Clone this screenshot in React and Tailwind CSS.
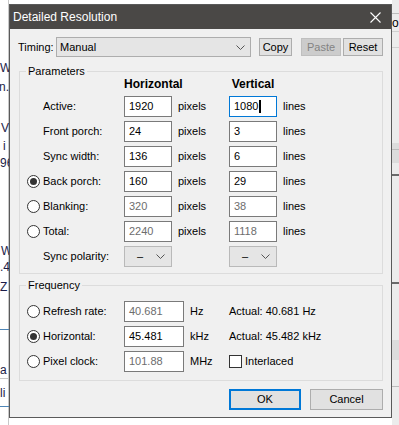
import React from 'react';

const font = { fontFamily: '"Liberation Sans", Arial, sans-serif' };

const Radio = ({ checked }) => (
    <span className="w-[13px] h-[13px] rounded-full border border-[#333] bg-white flex items-center justify-center shrink-0">
        {checked && <span className="w-[7px] h-[7px] rounded-full bg-[#333]" />}
    </span>
);

const Field = ({ value, disabled, focused, width = 'w-[48px]' }) => (
    <div
        className={`${width} h-[21px] bg-white border flex items-center pl-[4px] ${
            focused ? 'border-[#0078d7]' : 'border-[#7a7a7a]'
        } ${disabled ? 'text-[#6d6d6d]' : 'text-black'}`}
    >
        {value}
        {focused && <span className="w-[2px] h-[13px] bg-black ml-[1px]" />}
    </div>
);

const Chevron = () => (
    <svg width="9" height="5" viewBox="0 0 9 5" className="shrink-0">
        <path d="M0.5 0.5 L4.5 4.5 L8.5 0.5" fill="none" stroke="#555" strokeWidth="1" />
    </svg>
);

const paramRows = [
    { label: 'Active:', h: '1920', v: '1080', focused: true },
    { label: 'Front porch:', h: '24', v: '3' },
    { label: 'Sync width:', h: '136', v: '6' },
    { label: 'Back porch:', h: '160', v: '29', radio: true, checked: true },
    { label: 'Blanking:', h: '320', v: '38', radio: true, disabled: true },
    { label: 'Total:', h: '2240', v: '1118', radio: true, disabled: true },
];

const freqRows = [
    { label: 'Refresh rate:', value: '40.681', unit: 'Hz', actual: 'Actual: 40.681 Hz', disabled: true },
    { label: 'Horizontal:', value: '45.481', unit: 'kHz', actual: 'Actual: 45.482 kHz', checked: true },
    { label: 'Pixel clock:', value: '101.88', unit: 'MHz', disabled: true, interlaced: true },
];

const Polarity = () => (
    <div className="w-[48px] h-[21px] bg-[#e5e5e5] border border-[#b9b9b9] flex items-center pl-[12px] pr-[6px] justify-between">
        <span className="text-black">–</span>
        <Chevron />
    </div>
);

const Backdrop = () => (
    <div className="absolute inset-0 bg-white text-[#1c1c48] text-[12px] leading-[14px]" style={font}>
        {/* bits of the window behind, left side */}
        <div className="absolute left-[8px] top-0 bottom-0 w-px bg-[#c8c8c8]" />
        <span className="absolute left-[0px] top-[61px]">W</span>
        <span className="absolute left-[-1px] top-[80px]">n.</span>
        <span className="absolute left-[1px] top-[121px]">V</span>
        <span className="absolute left-[3px] top-[139px]">i</span>
        <span className="absolute left-[0px] top-[156px]">96</span>
        <span className="absolute left-[1px] top-[244px]">W</span>
        <span className="absolute left-[0px] top-[260px]">.4</span>
        <span className="absolute left-[0px] top-[280px]">Z</span>
        <div className="absolute left-0 w-[9px] top-[329px] h-px bg-[#4f87b8]" />
        <span className="absolute left-[0px] top-[363px]">a</span>
        <div className="absolute left-0 w-[9px] top-[378px] h-px bg-[#c8c8c8]" />
        <span className="absolute left-[0px] top-[386px]">li</span>
        <div className="absolute left-0 w-[9px] top-[406px] h-px bg-[#4f87b8]" />

        {/* right side */}
        <div className="absolute right-0 top-0 bottom-0 w-[7px] bg-[#ececec] overflow-hidden">
            <div className="absolute inset-x-0 top-[13px] h-px bg-[#bdbdbd]" />
            <span className="absolute left-[0px] top-[16px] text-black">o</span>
            <div className="absolute inset-x-0 top-[31px] h-px bg-[#d0d0d0]" />
            <div className="absolute inset-x-0 top-[47px] h-px bg-[#d0d0d0]" />
            <div className="absolute inset-x-0 top-[143px] h-[20px] bg-[#dcdcdc]" />
            <div className="absolute inset-x-0 top-[149px] h-px bg-[#bcbcbc]" />
            <div className="absolute inset-x-0 top-[174px] h-[2px] bg-[#6a6a6a]" />
            <div className="absolute inset-x-0 top-[282px] h-[2px] bg-[#6a6a6a]" />
            <div className="absolute inset-x-0 top-[340px] h-[20px] bg-[#dcdcdc]" />
            <div className="absolute inset-x-0 top-[386px] h-px bg-[#bcbcbc]" />
        </div>
    </div>
);

const App = () => {
    return (
        <div className="relative w-[399px] h-[425px] overflow-hidden" style={font}>
            <Backdrop />

            {/* Dialog window */}
            <div className="absolute left-[9px] top-[4px] w-[383px] h-[414px] bg-[#f0f0f0] border border-[#5a5a5a] flex flex-col text-[11px] text-black">
                {/* Title bar */}
                <div className="h-[24px] bg-[#4a4846] flex items-center justify-between pl-[3px] pr-[10px] shrink-0">
                    <span className="text-white text-[12px]">Detailed Resolution</span>
                    <svg width="11" height="11" viewBox="0 0 11 11">
                        <path d="M0.5 0.5 L10.5 10.5 M10.5 0.5 L0.5 10.5" stroke="#fff" strokeWidth="1.1" />
                    </svg>
                </div>

                {/* Timing row */}
                <div className="flex items-center mt-[8px] pl-[8px] h-[20px]">
                    <span className="w-[38px]">Timing:</span>
                    <div className="w-[195px] h-[20px] bg-[#e5e5e5] border border-[#adadad] flex items-center justify-between pl-[3px] pr-[5px]">
                        <span>Manual</span>
                        <Chevron />
                    </div>
                    <button className="ml-[8px] w-[33px] h-[18px] bg-[#e1e1e1] border border-[#adadad] flex items-center justify-center">
                        Copy
                    </button>
                    <button className="ml-[9px] w-[40px] h-[18px] bg-[#cccccc] border border-[#bfbfbf] text-[#838383] flex items-center justify-center">
                        Paste
                    </button>
                    <button className="ml-[2px] w-[40px] h-[18px] bg-[#e1e1e1] border border-[#adadad] flex items-center justify-center">
                        Reset
                    </button>
                </div>

                {/* Parameters */}
                <fieldset className="ml-[9px] mr-[8px] mt-[7px] border border-[#dcdcdc] pb-[6px]">
                    <legend className="ml-[6px] px-[2px] h-[14px] leading-[14px]">Parameters</legend>
                    <div className="grid grid-cols-[23px_81px_48px_57px_48px_1fr] items-center">
                        <span className="col-start-3 text-center font-bold text-[12px] leading-[14px] -mt-[1px] whitespace-nowrap">Horizontal</span>
                        <span className="col-start-5 text-center font-bold text-[12px] leading-[14px] -mt-[1px] whitespace-nowrap">Vertical</span>
                    </div>
                    <div className="flex flex-col gap-[4px] mt-[5px]">
                        {paramRows.map((row) => (
                            <div key={row.label} className="grid grid-cols-[23px_81px_48px_57px_48px_1fr] items-center h-[21px]">
                                <span className="pl-[7px]">{row.radio && <Radio checked={row.checked} />}</span>
                                <span>{row.label}</span>
                                <Field value={row.h} disabled={row.disabled} />
                                <span className="pl-[6px]">pixels</span>
                                <Field value={row.v} disabled={row.disabled} focused={row.focused} />
                                <span className="pl-[6px]">lines</span>
                            </div>
                        ))}
                        <div className="grid grid-cols-[23px_81px_48px_57px_48px_1fr] items-center h-[21px]">
                            <span />
                            <span>Sync polarity:</span>
                            <Polarity />
                            <span />
                            <Polarity />
                        </div>
                    </div>
                </fieldset>

                {/* Frequency */}
                <fieldset className="ml-[9px] mr-[8px] mt-[4px] border border-[#dcdcdc] pb-[8px]">
                    <legend className="ml-[6px] px-[2px] h-[14px] leading-[14px]">Frequency</legend>
                    <div className="flex flex-col gap-[4px] mt-[9px]">
                        {freqRows.map((row) => (
                            <div key={row.label} className="grid grid-cols-[23px_81px_60px_45px_1fr] items-center h-[21px]">
                                <span className="pl-[7px]"><Radio checked={row.checked} /></span>
                                <span>{row.label}</span>
                                <Field value={row.value} disabled={row.disabled} width="w-[60px]" />
                                <span className="pl-[6px]">{row.unit}</span>
                                {row.interlaced ? (
                                    <span className="flex items-center gap-[3px]">
                                        <span className="w-[13px] h-[13px] border border-[#333] bg-white" />
                                        Interlaced
                                    </span>
                                ) : (
                                    <span>{row.actual}</span>
                                )}
                            </div>
                        ))}
                    </div>
                </fieldset>

                {/* Buttons */}
                <div className="flex justify-end gap-[9px] mt-[8px] mr-[8px]">
                    <button className="w-[72px] h-[21px] bg-[#e1e1e1] border-2 border-[#0078d7] flex items-center justify-center">
                        OK
                    </button>
                    <button className="w-[73px] h-[21px] bg-[#e1e1e1] border border-[#adadad] flex items-center justify-center">
                        Cancel
                    </button>
                </div>
            </div>
        </div>
    );
};

export default App;
